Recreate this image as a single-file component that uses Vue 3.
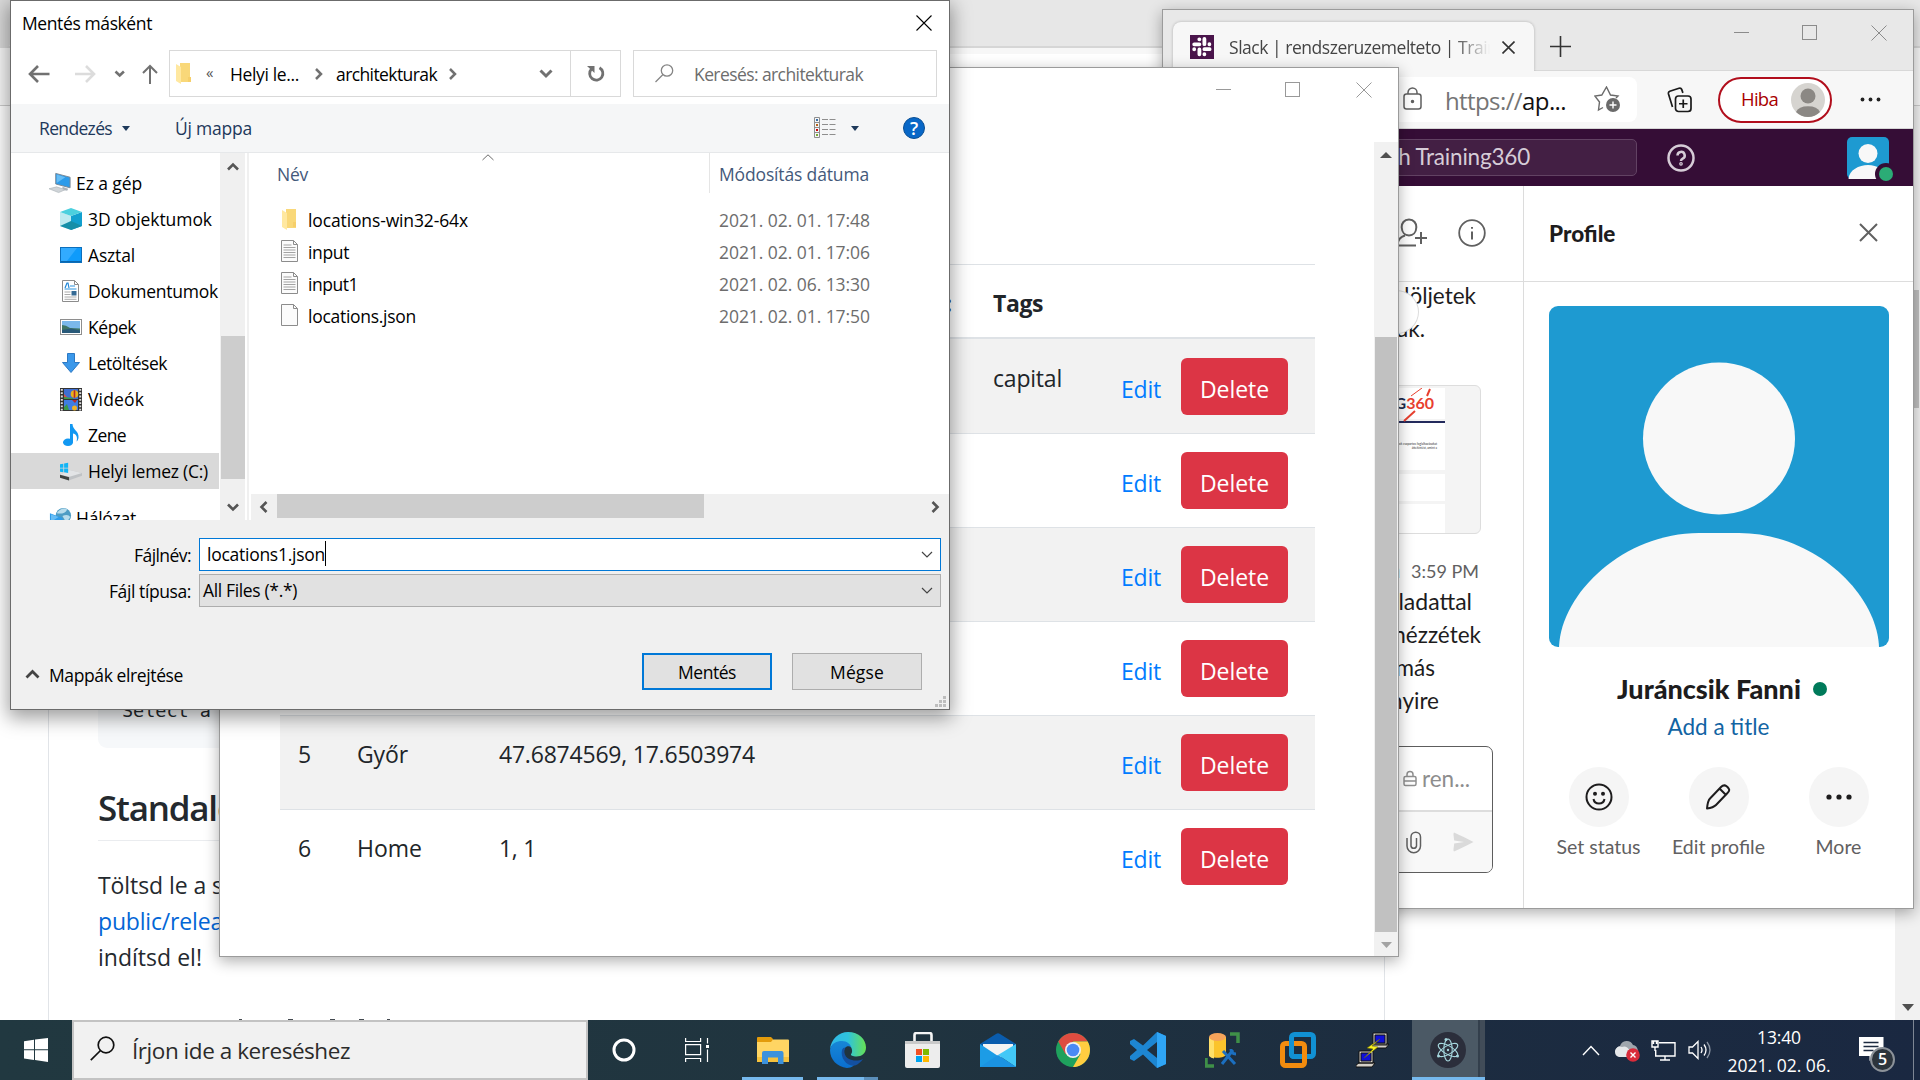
<script setup>
const tree = [
  { icon: 'pc', label: 'Ez a gép', w: 66, root: true },
  { icon: 'cube', label: '3D objektumok', w: 124 },
  { icon: 'desk', label: 'Asztal', w: 47 },
  { icon: 'docs', label: 'Dokumentumok', w: 130 },
  { icon: 'pics', label: 'Képek', w: 48 },
  { icon: 'down', label: 'Letöltések', w: 79 },
  { icon: 'film', label: 'Videók', w: 56 },
  { icon: 'note', label: 'Zene', w: 38 },
  { icon: 'disk', label: 'Helyi lemez (C:)', w: 120, selected: true },
  { icon: 'net', label: 'Hálózat', w: 60, root: true, gap: true },
]
const files = [
  { icon: 'folder', name: 'locations-win32-64x', w: 160, date: '2021. 02. 01. 17:48' },
  { icon: 'text', name: 'input', w: 41, date: '2021. 02. 01. 17:06' },
  { icon: 'text', name: 'input1', w: 50, date: '2021. 02. 06. 13:30' },
  { icon: 'blank', name: 'locations.json', w: 108, date: '2021. 02. 01. 17:50' },
]
const rows = [
  { id: 1, name: '', coords: '', tags: 'capital' },
  { id: 2, name: '', coords: '', tags: '' },
  { id: 3, name: '', coords: '', tags: '' },
  { id: 4, name: '', coords: '', tags: '' },
  { id: 5, name: 'Győr', nw: 51, coords: '47.6874569, 17.6503974', cw: 256, tags: '' },
  { id: 6, name: 'Home', nw: 65, coords: '1, 1', cw: 37, tags: '' },
]

// Tracks a label so that it spans the given width.
const vFit = {
  mounted(el, { value }) {
    if (!value) return
    const range = document.createRange()
    range.selectNodeContents(el)
    const width = range.getBoundingClientRect().width
    const count = el.textContent.length
    if (count) el.style.letterSpacing = ((value - width) / count).toFixed(3) + 'px'
  },
}
</script>

<template>
  <div class="desktop">
    <!-- Background browser -->
    <div class="back">
      <div class="back-strip"><div class="back-tab"></div></div>
      <div class="back-bar"><div class="back-address"></div></div>
      <div class="back-body">
        <div class="gutter"></div>
        <article class="doc">
          <div class="code"><span v-fit="89">Select a</span></div>
          <h2><span v-fit="179">Standalone</span></h2>
          <p><span v-fit="125">Töltsd le a s</span></p>
          <p class="link"><span v-fit="125">public/relea</span></p>
          <p><span v-fit="104">indítsd el!</span></p>
          <svg class="ticks" width="156" height="2"><path d="M1 1h3M50 1h5M92 1h5M121 1h5M149 1h3" stroke="#444a50" stroke-width="2" /></svg>
        </article>
        <div class="back-side"></div>
        <div class="back-scroll">
          <div class="back-thumb"></div>
          <svg width="12" height="7"><path d="M0 0h12l-6 7z" fill="#505050" /></svg>
        </div>
      </div>
    </div>

    <!-- Slack window -->
    <section class="win slack">
      <div class="tabs">
        <div class="tab">
          <svg width="24" height="24" viewBox="0 0 24 24"><rect width="24" height="24" fill="#4a154b" /><g stroke="#fff" stroke-width="3.800" stroke-linecap="round"><path d="M9.3 4.3h0.1M9.4 9.3H4.2M14.4 4v5.2M19.4 9.2v.1M14.4 14.2h5.2M14.4 19.2v.1M9.4 14.4v4.9M4.2 14.3v-.1" /></g></svg>
          <div class="tab-title"><span>Slack | rendszeruzemelteto | Training360</span></div>
          <svg class="tab-x" width="13" height="13"><path d="M.5.5l12 12M12.500.5l-12 12" stroke="#333" stroke-width="1.600" /></svg>
        </div>
        <svg class="plus" width="21" height="21"><path d="M10.500 0v21M0 10.500h21" stroke="#333" stroke-width="1.600" /></svg>
        <svg class="winbtns" width="153" height="16" fill="none" stroke="#8b8b8b"><path d="M0 7.500h15M137.500.5l15 15M152.500.5l-15 15" /><rect x="68.500" y=".5" width="14" height="14" /></svg>
      </div>
      <div class="toolbar">
        <div class="addr">
          <svg width="20" height="24" fill="none" stroke="#5f5f5f" stroke-width="1.500"><rect x="1" y="7" width="17" height="15" rx="2.500" /><path d="M5 7V5.500a4.500 4.500 0 0 1 9 0V7" /><circle cx="9.500" cy="14.500" r="1" fill="#5f5f5f" /></svg>
          <span class="url" v-fit="121"><i>https://</i>ap...</span>
          <svg width="27" height="27" viewBox="0 0 27 27" fill="none" stroke="#6a6a6a" stroke-width="1.400"><path d="M9 21.500l-4.500 2.500 1-8L.8 10l7-1L12.500 1l4 8 7.500 1-2 2" /><circle cx="19" cy="19" r="7" fill="#6a6a6a" stroke="none" /><path d="M19 15.500v7M15.500 19h7" stroke="#fff" /></svg>
        </div>
        <svg class="coll" width="26" height="26" viewBox="0 0 26 26" fill="none" stroke="#1a1a1a" stroke-width="1.700"><rect x="8.500" y="9" width="15.500" height="15.500" rx="3" /><path d="M16.250 12.500v8.500M12 16.750h8.500M5.500 20L1.500 7Q1 5 2.800 4.300L12 1.200q2-.6 2.700 1.200l1.200 3.500" /></svg>
        <div class="pill"><span v-fit="37">Hiba</span>
          <svg width="34" height="34" viewBox="0 0 34 34"><circle cx="17" cy="17" r="17" fill="#d6d4d0" /><circle cx="17" cy="13" r="7.500" fill="#8b8884" /><path d="M5 29a12.500 8 0 0 1 24 0 17 17 0 0 1-24 0z" fill="#8b8884" /></svg>
        </div>
        <svg class="dots" width="21" height="5"><g fill="#222"><circle cx="2.500" cy="2.500" r="1.900" /><circle cx="10.500" cy="2.500" r="1.900" /><circle cx="18.500" cy="2.500" r="1.900" /></g></svg>
      </div>
      <header class="slack-top">
        <div class="slack-search"><span>Search Training360</span></div>
        <svg class="help" width="28" height="28" viewBox="0 0 28 28" fill="none" stroke="#d6ccd7" stroke-width="2.500"><circle cx="14" cy="14" r="12.500" /><path d="M10.500 11.500a3.600 3.600 0 1 1 5.200 3.200q-1.700.9-1.700 2.300" /><circle cx="14" cy="19.800" r=".6" /></svg>
        <svg class="me" width="48" height="48" viewBox="0 0 48 48"><rect x="0" y="3" width="42" height="42" rx="5" fill="#1e9ad1" /><circle cx="21" cy="19.500" r="9.500" fill="#f8f8f8" /><path d="M1.500 45C2 36 12 31 21 31s18 5 19 14z" fill="#f8f8f8" /><circle cx="39" cy="40" r="11" fill="#350d36" /><circle cx="39" cy="40" r="7" fill="#2bac76" /></svg>
      </header>
      <div class="slack-body">
        <div class="chat">
          <div class="chat-head">
            <svg width="31" height="29" viewBox="0 0 31 29" fill="none" stroke="#606060" stroke-width="2"><path d="M12 1.500c5 0 7.500 4 7.300 8-.2 5-3.300 8-7.300 8s-7-3-7.300-8c-.2-4 2.300-8 7.300-8zM8 17.500c-5 1.500-7.500 5-7.500 10H19M24 14v12M18 20h12" /></svg>
            <svg width="28" height="28" viewBox="0 0 28 28" fill="none" stroke="#606060" stroke-width="1.800"><circle cx="14" cy="14" r="12.800" /><path d="M14 12.500v8M14 8v1.800" stroke-width="2" /></svg>
          </div>
          <div class="msgs">
            <div class="m1">küldöljetek</div>
            <div class="m2">hozzájuk.</div>
            <div class="preview">
              <div class="page">
                <svg width="70" height="36" viewBox="0 0 70 36" stroke="#e8402f" fill="none"><path d="M34 8L45 0" /><path d="M53 1l-3 7M27 33l11-10" stroke-width="2" /></svg>
                <b><u>G</u>360</b>
                <hr />
                <small>feladatok csoportos foglalkozásokat<br />áttekintést, amint a</small>
                <div class="cell"></div><div class="cell last"></div>
              </div>
            </div>
            <div class="time"><em>n</em>3:59 PM</div>
            <div class="line l1">feladattal</div>
            <div class="line l2">nézzétek</div>
            <div class="line l3">más</div>
            <div class="line l4">mennyire</div>
            <div class="bubble"></div>
          </div>
          <div class="composer">
            <div class="ph">
              <svg width="14" height="17" fill="none" stroke="#8f8f8f" stroke-width="1.500"><rect x="1" y="6.500" width="12" height="9" rx="1.500" /><path d="M4 6V4.500a3 3 0 0 1 6 0V6M1 11h12" /></svg>ren...
            </div>
            <div class="tools">
              <svg width="16" height="23" viewBox="0 0 16 23" fill="none" stroke="#606060" stroke-width="1.500"><path d="M1 7v8a6.500 6.500 0 0 0 13.500 0V6a4.700 4.700 0 0 0-9.500 0v9a2.800 2.800 0 0 0 5.500 0V7" /></svg>
              <svg width="21" height="20" viewBox="0 0 21 20"><path d="M1 .5q8 3.500 19.500 9.500Q9 16 1 19.500q-.8-1-.5-2.500l.7-5.500L11 10 1.200 8.500.5 3Q.2 1.500 1 .5z" fill="#dadada" /></svg>
            </div>
          </div>
        </div>
        <aside class="profile">
          <div class="prof-head"><b>Profile</b>
            <svg width="19" height="19"><path d="M1 1l17 17M18 1L1 18" stroke="#606060" stroke-width="2" /></svg>
          </div>
          <svg class="photo" width="340" height="341" viewBox="0 0 340 341"><rect width="340" height="341" rx="9" fill="#1e9ad1" /><circle cx="170" cy="132.500" r="76" fill="#f8f8f8" /><path d="M10 341C12 287 75 227 150 227h40c75 0 138 60 140 114z" fill="#f8f8f8" /></svg>
          <div class="name">Juráncsik Fanni<i></i></div>
          <div class="addtitle">Add a title</div>
          <div class="acts">
            <div class="act"><div><svg width="28" height="28" viewBox="0 0 28 28" fill="none" stroke="#1d1c1d" stroke-width="2"><circle cx="14" cy="14" r="12.500" /><path d="M8.500 16c1 6 10 6 11 0" /><g fill="#1d1c1d" stroke="none"><circle cx="10" cy="10.800" r="2" /><circle cx="18" cy="10.800" r="2" /></g></svg></div>Set status</div>
            <div class="act"><div><svg width="25" height="26" viewBox="0 0 25 26" fill="none" stroke="#1d1c1d" stroke-width="2" stroke-linejoin="round"><path d="M1 24.500c.5-5 1-8 3-10L15 3c3-3 5-1.500 6.500 0s3 3.500 0 6L10 21c-2.500 2.500-5 3-9 3.500zM13.500 4.500l7 7" /></svg></div>Edit profile</div>
            <div class="act"><div><svg width="26" height="6"><g fill="#1d1c1d"><circle cx="3" cy="3" r="2.600" /><circle cx="13" cy="3" r="2.600" /><circle cx="23" cy="3" r="2.600" /></g></svg></div>More</div>
          </div>
        </aside>
      </div>
    </section>

    <!-- Locations app window -->
    <section class="win app">
      <div class="app-title">
        <svg width="156" height="16" fill="none" stroke="#999"><path d="M0 7.500h15M140.500.5l15 15M155.500.5l-15 15" /><rect x="69.500" y=".5" width="14" height="14" /></svg>
      </div>
      <div class="app-body">
        <div class="table">
          <div class="tr th"><span class="c1">#</span><span class="c2">Name</span><span class="c3"><b>:</b></span><span class="c4" v-fit="50">Tags</span></div>
          <div v-for="r in rows" :key="r.id" class="tr" :class="{ odd: r.id % 2 }">
            <span class="c1">{{ r.id }}</span>
            <span class="c2"><span v-fit="r.nw">{{ r.name }}</span></span>
            <span class="c3"><span v-fit="r.cw">{{ r.coords }}</span></span>
            <span class="c4"><span v-fit="r.tags ? 69 : 0">{{ r.tags }}</span></span>
            <a><span v-fit="40">Edit</span></a>
            <button><span v-fit="69">Delete</span></button>
          </div>
        </div>
        <div class="app-scroll">
          <svg width="12" height="6"><path d="M0 6h12L6 0z" fill="#505050" /></svg>
          <div></div>
          <svg width="11" height="6"><path d="M0 0h11L5.500 6z" fill="#a3a3a3" /></svg>
        </div>
      </div>
    </section>

    <!-- Save dialog -->
    <section class="dialog">
      <div class="d-title"><span v-fit="130">Mentés másként</span>
        <svg width="16" height="16"><path d="M.5.5l15 15M15.500.5l-15 15" stroke="#000" stroke-width="1.100" /></svg>
      </div>
      <div class="d-nav">
        <svg class="arrows" width="130" height="24" viewBox="0 0 130 24" fill="none" stroke="#717171" stroke-width="2.600"><path d="M22.500 12h-18M11 4l-8 8 8 8" /><path d="M48 12h18M59 4l8 8-8 8" stroke="#dcdcdc" /><path d="M88.500 9.500l4.200 4 4.200-4" /><path d="M123 22V4M116 11l7-7 7 7" stroke-width="2" /></svg>
        <div class="path">
          <svg width="16" height="21" viewBox="0 0 16 21"><path d="M4 0h10v19H4z" fill="#f9d879" /><path d="M0 1l5 3v17l-5-3z" fill="#ffe8a0" /><path d="M12 14h3v5h-3z" fill="#f6cf6a" /></svg>
          <span class="laq">«</span>
          <span class="p1" v-fit="69">Helyi le...</span>
          <svg width="8" height="12"><path d="M1 1l5 5-5 5" fill="none" stroke="#717171" stroke-width="2.500" /></svg>
          <span class="p2" v-fit="101">architekturak</span>
          <svg width="8" height="12"><path d="M1 1l5 5-5 5" fill="none" stroke="#717171" stroke-width="2.500" /></svg>
          <svg class="pd" width="14" height="10"><path d="M1.500 1.500l5.500 5.500 5.500-5.500" fill="none" stroke="#717171" stroke-width="3" /></svg>
          <div class="refresh"><svg width="18" height="18" viewBox="0 0 18 18"><path d="M12.500 2.800A6.600 6.600 0 1 1 4.500 4" fill="none" stroke="#717171" stroke-width="2.800" /><path d="M0 1h7.500v7z" fill="#717171" /></svg></div>
        </div>
        <div class="search">
          <svg width="19" height="19" fill="none" stroke="#858585" stroke-width="1.300"><circle cx="12" cy="6.500" r="5.700" /><path d="M8 10.500L.5 18" /></svg>
          <span v-fit="169">Keresés: architekturak</span>
        </div>
      </div>
      <div class="d-cmd">
        <span v-fit="73">Rendezés</span>
        <svg width="8" height="5"><path d="M0 0h8L4 5z" fill="#1e395b" /></svg>
        <span class="nf" v-fit="77">Új mappa</span>
        <svg class="view" width="22" height="22" fill="none" stroke="#8e8e8e"><path d="M.5.5h5v20h-5zM.5 5.500h5M.5 10.500h5M.5 15.500h5" /><path d="M8 2.500h6M15.500 2.500h6M8 7.500h6M15.500 7.500h6M8 12.500h6M15.500 12.500h6M8 17.500h6M15.500 17.500h6" /><path d="M2 3h2" stroke="#3a6ea5" stroke-width="2" /><path d="M2 8h2" stroke="#b5651d" stroke-width="2" /><path d="M2 13h2" stroke="#c00" stroke-width="2" /><path d="M2 18h2" stroke="#7a3" stroke-width="2" /></svg>
        <svg width="8" height="5"><path d="M0 0h8L4 5z" fill="#1e395b" /></svg>
        <div class="q">?</div>
      </div>
      <div class="d-main">
        <div class="tree">
          <div v-for="t in tree" :key="t.label" class="node" :class="{ root: t.root, sel: t.selected, gap: t.gap }">
            <svg v-if="t.icon === 'pc'" width="24" height="22" viewBox="0 0 24 22"><path d="M7 1l15 4v11L7 12z" fill="#2c9bea" stroke="#7a8894" /><path d="M8 2l9 3-9 6z" fill="#66bdf5" /><path d="M14 15l6 2-1 2-5-1z" fill="#aab2ba" /><path d="M0 17l8-2 9 3-7 3z" fill="#cfd4d8" stroke="#a5adb3" stroke-width=".6" /></svg>
            <svg v-else-if="t.icon === 'cube'" width="22" height="22" viewBox="0 0 22 22"><path d="M0 4l11 4v14L0 18z" fill="#bdeaf0" /><path d="M22 4L11 8v14l11-4z" fill="#12a0cf" /><path d="M0 4l11-4 11 4-11 4z" fill="#4bd0de" /><path d="M0 18l11-5 11 5-11 4z" fill="#168fa8" /></svg>
            <svg v-else-if="t.icon === 'desk'" width="22" height="16"><rect x=".5" y=".5" width="21" height="15" fill="#0f9bfb" stroke="#0c6fbc" /><path d="M1 1h16L7 14H1z" fill="#32abff" /><path d="M1 14.500h20" stroke="#0a66ad" /></svg>
            <svg v-else-if="t.icon === 'docs'" width="22" height="22" viewBox="0 0 22 22"><path d="M2.500.5h12l4 4v17h-16z" fill="#fff" stroke="#8c8c8c" /><path d="M14.500.5v4h4" fill="none" stroke="#8c8c8c" /><path d="M5 8l2-5h1l1 5" stroke="#1f86d8" stroke-width="1.200" fill="none" /><path d="M10 6h5M4.500 9h12" stroke="#2d93e0" stroke-width="1.200" /><path d="M4.500 12h6M4.500 14.500h6M4.500 17h12M4.500 19.300h12" stroke="#aaa" /><path d="M11.500 11h5v4.500h-5z" fill="#346a94" /></svg>
            <svg v-else-if="t.icon === 'pics'" width="22" height="16"><rect x=".5" y=".5" width="21" height="15" fill="#fff" stroke="#8e8e8e" /><rect x="2" y="2" width="18" height="12" fill="#7bb8ea" /><path d="M2 6q4 0 8 3l10 .5V14H2z" fill="#3f7565" /><path d="M2 11l9-1.500 9 2V14H2z" fill="#285979" /></svg>
            <svg v-else-if="t.icon === 'down'" width="22" height="20"><path d="M7.500.5h7v9h5L11 19.500 2.500 9.500h5z" fill="#3b98ea" stroke="#2c79c4" /></svg>
            <svg v-else-if="t.icon === 'film'" width="22" height="23" viewBox="0 0 22 23"><rect width="22" height="23" fill="#333" /><path d="M1.800 1v22M20.200 1v22" stroke="#ddd" stroke-width="2" stroke-dasharray="1.800 1.500" /><rect x="4" y="1" width="14" height="10" fill="#3f6fd2" /><rect x="4" y="12" width="14" height="10" fill="#3f7de4" /><path d="M4 11V6l4 4 5 1z" fill="#dc5148" /><path d="M4 11v-2l9 1v1zM4 22v-3l3-3 2 6z" fill="#3c9a4a" /><circle cx="14.500" cy="6" r="3.800" fill="#e8b21a" /><path d="M14.500 2.200v7.600" stroke="#b8262a" stroke-width="1.600" /><circle cx="14.500" cy="20" r="2.500" fill="#f1b326" /><path d="M12 12l5 0-2 3z" fill="#b42c2c" /></svg>
            <svg v-else-if="t.icon === 'note'" width="22" height="22" viewBox="0 0 22 22"><ellipse cx="8" cy="18.300" rx="5" ry="3.700" fill="#1198f2" /><path d="M10 18V0h2.500c0 6 7 7 6 14-.3 1.500-1 3-2 3.500C18 13 16 10 13 9.500V18z" fill="#1198f2" /></svg>
            <svg v-else-if="t.icon === 'disk'" width="23" height="20" viewBox="0 0 23 20"><path d="M0 14l10-5 13 3v3L9 20l-9-4z" fill="#bfc2c5" /><path d="M0 14l10-5 13 3-13 4z" fill="#e2e4e6" /><path d="M0 14l9.500 2.500V20L0 17z" fill="#3e4240" /><path d="M0 3l3.500-.6V6.500H0zM4.300 2.200L8.500 1.500v5H4.300zM0 7.300h3.500v3.900L0 10.700zM4.300 7.300h4.200V12l-4.200-.7z" fill="#12b5f5" /></svg>
            <svg v-else width="24" height="22" viewBox="0 0 24 22"><circle cx="15" cy="8.500" r="8" fill="#4d9cc4" /><path d="M8 6c3-5 8-6 11-4-2 4-6 5-11 4zM14 9c4-2 7-1 8 1-1 3-3 4-5 4z" fill="#b7dcec" /><path d="M1 6l13 5v11H1z" fill="#2c9bea" /><path d="M2 7l8 3-8 5z" fill="#66bdf5" /></svg>
            <span v-fit="t.w">{{ t.label }}</span>
          </div>
        </div>
        <div class="d-vs">
          <svg width="12" height="9"><path d="M1 7.500l5-5 5 5" fill="none" stroke="#555" stroke-width="2.600" /></svg>
          <div></div>
          <svg width="12" height="9"><path d="M1 1.500l5 5 5-5" fill="none" stroke="#555" stroke-width="2.600" /></svg>
        </div>
        <div class="files">
          <div class="f-head">
            <div class="fc1"><span v-fit="31">Név</span><svg width="12" height="7"><path d="M.5 6L6 .8 11.500 6" fill="none" stroke="#6b6b6b" /></svg></div>
            <div class="fc2"><span v-fit="150">Módosítás dátuma</span></div>
          </div>
          <div class="f-list">
            <div v-for="f in files" :key="f.name" class="file">
              <svg v-if="f.icon === 'folder'" width="17" height="21" viewBox="0 0 17 21"><path d="M5 0h10v19H5z" fill="#f9d879" /><path d="M1 1l5 3v17l-5-3z" fill="#ffe8a0" /><path d="M12 13h3v5h-3z" fill="#f6cf6a" /></svg>
              <svg v-else width="17" height="22" viewBox="0 0 17 22"><path d="M.5.5h12l4 4v17H.5z" fill="#fbfbfb" stroke="#8c8c8c" /><path d="M12.500.5v4h4" fill="none" stroke="#8c8c8c" /><path v-if="f.icon === 'text'" d="M2.500 5h8M2.500 7.500h12M2.500 10h12M2.500 12.500h12M2.500 15h12M2.500 17.500h12" stroke="#a3a3a3" /></svg>
              <div class="fn"><span v-fit="f.w">{{ f.name }}</span></div>
              <div class="fd"><span v-fit="151">{{ f.date }}</span></div>
            </div>
          </div>
          <div class="d-hs">
            <svg width="9" height="12"><path d="M7.500 1l-5 5 5 5" fill="none" stroke="#555" stroke-width="2.600" /></svg>
            <div></div>
            <svg width="9" height="12"><path d="M1.500 1l5 5-5 5" fill="none" stroke="#555" stroke-width="2.600" /></svg>
          </div>
        </div>
      </div>
      <div class="d-form">
        <label><span v-fit="57">Fájlnév:</span></label>
        <div class="field focus"><span v-fit="118">locations1.json</span><i></i>
          <svg width="12" height="8"><path d="M1 1l5 5 5-5" fill="none" stroke="#444" stroke-width="1.200" /></svg></div>
        <label><span v-fit="82">Fájl típusa:</span></label>
        <div class="field"><span v-fit="94">All Files (*.*)</span>
          <svg width="12" height="8"><path d="M1 1l5 5 5-5" fill="none" stroke="#444" stroke-width="1.200" /></svg></div>
      </div>
      <div class="d-foot">
        <svg width="15" height="10"><path d="M1.500 8.500l6-6 6 6" fill="none" stroke="#444" stroke-width="2.800" /></svg>
        <span v-fit="134">Mappák elrejtése</span>
        <div class="btn def"><span v-fit="58">Mentés</span></div>
        <div class="btn"><span v-fit="54">Mégse</span></div>
      </div>
      <svg class="grip" width="12" height="12" fill="#bdbdbd"><path d="M8 0h3v3H8zM4 4h3v3H4zM8 4h3v3H8zM0 8h3v3H0zM4 8h3v3H4zM8 8h3v3H8z" /></svg>
    </section>

    <!-- Taskbar -->
    <footer class="taskbar">
      <div class="start"><svg width="24" height="24" viewBox="0 0 24 24"><path d="M0 3.300L10 1.800V11.300H0zM11 1.600L24 0v11.300H11zM0 12.300h10v9.600L0 20.600zM11 12.300h13V24l-13-1.900z" fill="#fff" /></svg></div>
      <div class="tb-search">
        <svg width="25" height="25" fill="none" stroke="#111" stroke-width="1.700"><circle cx="16" cy="9" r="7.800" /><path d="M10.500 14.500L.8 24.200" /></svg>
        <span v-fit="218">Írjon ide a kereséshez</span>
      </div>
      <div class="ic"><svg width="24" height="24"><circle cx="12" cy="12" r="10" fill="none" stroke="#fff" stroke-width="3" /></svg></div>
      <div class="ic"><svg width="25" height="24" fill="none" stroke="#fff" stroke-width="1.200"><path d="M.6 0v3.500h15V0M.6 24v-3.500h15V24M.6 6.600h15v10H.6zM22.500 0v5.500M22.500 11.500V24" /><path d="M21 7h3v3h-3z" fill="#fff" stroke="none" /></svg></div>
      <div class="ic run"><svg width="32" height="27" viewBox="0 0 32 27"><path d="M0 1q0-1 1-1h13l2 2v5H0z" fill="#e39b0b" /><path d="M0 5h14l2-2.500h15q1 0 1 1V25H0z" fill="#ffd563" /><path d="M0 20h32v5H0z" fill="#f6c23c" /><path d="M5 27V16q0-2 2-2h17.500q2 0 2 2v11H21v-6.500H11V27z" fill="#3c92dc" /></svg></div>
      <div class="ic run multi"><svg width="36" height="36" viewBox="0 0 36 36">
        <defs><linearGradient id="eg" x1="0" x2="1"><stop offset="0" stop-color="#2fb7e8" /><stop offset=".5" stop-color="#2fc3dc" /><stop offset="1" stop-color="#67e053" /></linearGradient><linearGradient id="eb" x1="0" y1="0" x2="0" y2="1"><stop offset="0" stop-color="#1787d6" /><stop offset="1" stop-color="#0a6fcf" /></linearGradient></defs>
        <path d="M0 17C1 7 9 0 18 0c11 0 18 7.500 18 15.500 0 6-4.500 9-9.500 9-4 0-6-1.200-5.500-2.300 2-2 1.500-7-2.500-9.500C13 8.500 3 9.500 0 17z" fill="url(#eg)" />
        <path d="M0 18C1 11 7 9 12 9c5 0 9 3.500 9.500 7-1.500-2.500-5-2.500-6.500 0-4 6 1 15 9 17.500-3 1.800-4.500 2.500-7 2.500C7 35 0 27.500 0 18z" fill="url(#eb)" />
        <path d="M12 18c-2 8 5 17 13 15.500 3-1 6.500-4 8-6.500-6 3-17 2-18.500-6-.3-2 0-4 1-5.500-1.500 0-3 .8-3.500 2.500z" fill="#1350a0" /></svg></div>
      <div class="ic"><svg width="36" height="36" viewBox="0 0 36 36"><path d="M9.500 12V3q0-2 2-2h13q2 0 2 2v9" fill="none" stroke="#f5f5f5" stroke-width="2.600" /><path d="M0 9h35v25q0 2-2 2H2q-2 0-2-2z" fill="#ededed" /><path d="M0 9h35v3H0z" fill="#c9c9c9" /><path d="M11 17h6v6h-6z" fill="#f25022" /><path d="M18 17h6v6h-6z" fill="#7fba00" /><path d="M11 24h6v6h-6z" fill="#00a4ef" /><path d="M18 24h6v6h-6z" fill="#ffb900" /></svg></div>
      <div class="ic"><svg width="36" height="34" viewBox="0 0 36 34"><path d="M0 11L16 1q2-1.500 4 0l16 10v8H0z" fill="#0a5cad" /><path d="M3 11h30v8L18 26 3 19z" fill="#f3f3f3" /><path d="M0 11l18 12L36 34H0z" fill="#1c9ce6" /><path d="M36 11L18 22l18 12z" fill="#42c8f7" /><path d="M0 34l18-12 18 12z" fill="#1b93e2" /></svg></div>
      <div class="ic"><svg width="34" height="34" viewBox="0 0 34 34"><circle cx="17" cy="17" r="17" fill="#1fa15d" /><path d="M2.300 8.500A17 17 0 0 1 31.700 8.500H17l-7.400 12.700z" fill="#de4c40" /><path d="M31.700 8.500A17 17 0 0 1 17 34l7.400-12.700L17 8.500z" fill="#ffcd40" /><circle cx="17" cy="17" r="8" fill="#f1f1f1" /><circle cx="17" cy="17" r="6.300" fill="#4a8af4" /></svg></div>
      <div class="ic"><svg width="36" height="36" viewBox="0 0 36 36"><path d="M27 0l9 4v28l-9 4-14-13.500L4 29l-4-2v-3l7-6-7-6V9l4-2 9 6.500zM27 10l-10 8 10 8z" fill="#1d86d2" fill-rule="evenodd" /><path d="M27 0l9 4v28l-9 4z" fill="#2fa5f5" /></svg></div>
      <div class="ic"><svg width="36" height="36" viewBox="0 0 36 36"><path d="M4 5v17c0 5 17 5 17 0V5z" fill="#fbc42c" /><path d="M4 5v19q2 2 5 2.500V8z" fill="#ffe06a" /><ellipse cx="12.500" cy="5" rx="8.500" ry="4" fill="#f5a35a" /><path d="M25 2h8v9M1 26v8h8" fill="none" stroke="#3f9048" stroke-width="3.500" /><path d="M18 19l12 13M28 18l-11 14M26 17q0 5 5 5" stroke="#1b6fc0" stroke-width="3" fill="none" /></svg></div>
      <div class="ic"><svg width="36" height="36" viewBox="0 0 36 36" fill="none" stroke-width="5"><rect x="11.500" y="2.500" width="22" height="22" rx="3" stroke="#1191d4" /><rect x="2.500" y="11.500" width="22" height="22" rx="3" stroke="#f28c0f" /><path d="M11.500 9v13q0 2.500 2.500 2.500h4" stroke="#1191d4" /></svg></div>
      <div class="ic"><svg width="34" height="36" viewBox="0 0 34 36"><g stroke="#111" stroke-width="1"><path d="M17 1h14v12H17zM14 15l4-3h15l-3 4H14zM3 19h14v12H3zM0 33l3-2h16l-3 4H0z" fill="#d4d0c8" /><path d="M19 3h10v8H19zM5 21h10v8H5z" fill="#1010d8" /></g><path d="M24 7l-13 9 6 1-9 9 14-11-6-1z" fill="#f8f020" stroke="#6b6700" stroke-width=".5" /></svg></div>
      <div class="ic run active"><svg width="36" height="36" viewBox="0 0 36 36"><circle cx="18" cy="18" r="18" fill="#2b2e3b" /><g fill="none" stroke="#a5d6dd" stroke-width="1.100"><ellipse cx="18" cy="18" rx="11" ry="4.200" transform="rotate(-30 18 18)" /><ellipse cx="18" cy="18" rx="11" ry="4.200" transform="rotate(30 18 18)" /><ellipse cx="18" cy="18" rx="11" ry="4.200" transform="rotate(90 18 18)" /></g><g fill="#a5d6dd"><circle cx="18" cy="18" r="1.200" /><circle cx="8.500" cy="24" r="1.500" /><circle cx="27.500" cy="24" r="1.500" /><circle cx="16" cy="7.500" r="1.500" /></g></svg></div>
      <div class="tray">
        <svg width="18" height="11"><path d="M1 10l8-8.500L17 10" fill="none" stroke="#fff" stroke-width="1.400" /></svg>
        <svg class="cloud" width="25" height="22" viewBox="0 0 25 22"><path d="M3 15a5 5 0 0 1 2-9 7 7 0 0 1 13-1 6 6 0 0 1 2 11z" fill="#9fa6ad" /><path d="M0 12a5 5 0 0 1 7-5 6 6 0 0 1 8 5v5H4q-4-1-4-5z" fill="#e6e8ea" /><circle cx="18" cy="15" r="6.800" fill="#d92b3a" /><path d="M15.500 12.500l5 5M20.500 12.500l-5 5" stroke="#fff" stroke-width="1.400" /></svg>
        <svg class="lan" width="25" height="21" fill="none" stroke="#fff" stroke-width="1.400"><path d="M8 2.700h16V16H4.700V10M9 20h10M14 16v4M1 1h6v6H1zM4 7v4M2.500 1v3M5.500 1v3" /></svg>
        <svg class="vol" width="24" height="20" fill="none" stroke="#fff" stroke-width="1.300"><path d="M1 7h3.500L10 1.500v17L4.500 13H1zM13 7q2 3 0 6M16 4.500q4 5.500 0 11" /><path d="M19 2q6 8 0 16" stroke="#8b95a3" /></svg>
        <div class="clock"><span v-fit="44">13:40</span><span v-fit="103">2021. 02. 06.</span></div>
        <div class="note"><svg width="25" height="26"><path d="M0 0h24.500v19h-9l-5 5v-5H0z" fill="#fff" /><path d="M4.500 5.500h15M4.500 9.500h15M4.500 13.500h10" stroke="#1d2b40" stroke-width="1.300" /></svg><b>5</b></div>
        <div class="peek"></div>
      </div>
    </footer>
  </div>
</template>

<style>
body { margin: 0; overflow: hidden; }
</style>

<style scoped>
* { box-sizing: border-box; }
svg { display: block; flex: none; }
.desktop { position: relative; width: 1920px; height: 1080px; overflow: hidden; background: #fff; font-family: "Open Sans", "Noto Sans", sans-serif; font-size: 17.500px; color: #000; white-space: nowrap; }

.back { height: 1020px; display: flex; flex-direction: column; }
.back-strip { height: 48px; background: #e7e7e7; border-bottom: 2px solid #d6d6d6; flex: none; }
.back-tab { width: 11px; height: 48px; background: #d9d9d9; border-radius: 0 0 7px 0; }
.back-bar { height: 58px; background: #f7f7f7; border-bottom: 1px solid #ccc; padding: 6px 300px 6px 300px; flex: none; }
.back-address { height: 45px; background: #fff; }
.back-body { flex: 1; display: flex; overflow: hidden; min-height: 0; }
.gutter { width: 49px; border-right: 1px solid #e1e4e8; }
.doc { width: 1336px; padding-left: 49px; border-right: 1px solid #e1e4e8; color: #24292e; font-size: 23px; }
.code { height: 642px; background: #f6f8fa; border-radius: 9px; padding: 591px 0 0 24px; font: 500 18.500px/28px "DejaVu Sans Mono", monospace; }
h2 { margin: 34px 0 25px; height: 59px; padding-top: 2px; border-bottom: 1px solid #eaecef; font-size: 35px; line-height: 48px; font-weight: 600; }
p { margin: 0; line-height: 36px; position: relative; top: 1px; }
.link { color: #0366d6; }
.ticks { margin: 45px 0 0 140px; }
.back-side { flex: 1; }
.back-scroll { width: 25px; background: #f1f1f1; display: flex; flex-direction: column; align-items: center; justify-content: space-between; padding: 184px 0 9px; }
.back-thumb { width: 23px; height: 118px; background: #c1c1c1; }

.win { position: absolute; border: 1px solid #9b9b9b; background: #fff; display: flex; flex-direction: column; box-shadow: 0 4px 14px rgba(0, 0, 0, .32); }
.slack { left: 1162px; top: 9px; width: 752px; height: 900px; }
.tabs { height: 61px; background: #e8e8e8; border-bottom: 1px solid #d8d8d8; display: flex; padding-left: 10px; flex: none; }
.tab { margin-top: 12px; width: 361px; height: 49px; background: #f7f7f7; border-radius: 8px 8px 0 0; box-shadow: 0 0 3px rgba(0, 0, 0, .25); clip-path: inset(-4px -4px 0 -4px); display: flex; padding: 13px 0 0 17px; }
.tab-title { margin-left: 15px; width: 261px; height: 24px; line-height: 24px; overflow: hidden; color: #444; letter-spacing: -.47px; -webkit-mask-image: linear-gradient(90deg, #000 225px, transparent 261px); }
.tab-x { margin: 6px 0 0 12px; }
.plus { margin: 26px 0 0 16px; }
.winbtns { margin: 15px 0 0 163px; }
.toolbar { height: 58px; background: #f7f7f7; border-bottom: 1px solid #d5d5d5; display: flex; align-items: center; flex: none; }
.addr { width: 474px; height: 45px; background: #fff; border-radius: 8px; display: flex; align-items: center; padding-left: 240px; margin-top: -1px; }
.url { margin: 2px 0 0 22px; width: 121px; font-size: 24px; color: #111; }
.url i { font-style: normal; color: #757575; }
.addr svg + .url + svg { margin-left: 28px; }
.coll { margin-left: 30px; }
.pill { margin-left: 25px; width: 114px; height: 46px; border: 2px solid #b10e1c; border-radius: 23px; display: flex; align-items: center; justify-content: space-between; padding: 0 5px 0 21px; color: #a80000; font-size: 18.500px; background: #fff; }
.pill span { margin-top: -3px; }
.dots { margin-left: 28px; }
.slack-top { height: 57px; background: #350d36; display: flex; align-items: center; font-family: Lato, sans-serif; flex: none; }
.slack-search { width: 474px; height: 37px; border: 1px solid #624263; background: #431f44; border-radius: 5px; display: flex; align-items: center; justify-content: flex-end; padding-right: 106px; font-size: 22.500px; color: #d6ccd7; }
.slack-search span { margin-top: -2px; letter-spacing: -.2px; }
.help { margin-left: 30px; }
.me { margin-left: 152px; }
.slack-body { flex: 1; display: flex; font-family: Lato, sans-serif; font-size: 22.500px; color: #1d1c1d; min-height: 0; }
.chat { width: 361px; border-right: 1px solid #dcdcdc; display: flex; flex-direction: column; }
.chat-head { height: 96px; border-bottom: 1px solid #ddd; display: flex; align-items: center; padding: 0 0 2px 234px; gap: 30px; flex: none; }
.msgs { position: relative; height: 464px; line-height: 33px; overflow: hidden; }
.m1 { text-align: right; padding-right: 47px; margin-top: -3px; }
.m2 { text-align: right; padding-right: 98px; }
.preview { margin: 40px 0 0 70px; width: 248px; height: 149px; border: 1px solid #ddd; border-radius: 6px; background: #f4f4f4; overflow: hidden; padding-top: 2px; }
.page { position: relative; width: 211px; height: 146px; background: #f4f4f4; line-height: 1; }
.page svg { position: absolute; right: -2px; top: 0; }
.page b { display: block; height: 31px; background: #fff; padding: 7px 11px 0 0; text-align: right; color: #e8402f; font-size: 16px; letter-spacing: 0; }
.page u { color: #1c2d4e; text-decoration: none; }
.page hr { margin: 2px 0 0; border: 0; height: 2px; background: #232a5c; }
.page small { display: block; height: 47px; background: #fff; font-size: 3px; line-height: 3.500px; padding: 20px 8px 0 0; text-align: right; color: #333; }
.cell { height: 27px; margin-top: 4px; background: #fff; }
.cell.last { height: 32px; margin-top: 3px; }
.time { text-align: right; padding-right: 44px; font-size: 18px; color: #616061; height: 31px; line-height: 34px; margin-top: 20px; }
.time em { font: 900 22.500px Lato, sans-serif; color: #1d3f8f; margin-right: 11px; }
.line { text-align: right; }
.l1 { padding-right: 51px; font-size: 23px; } .l2 { padding-right: 42px; } .l3 { padding-right: 88px; } .l4 { padding-right: 84px; }
.bubble { position: absolute; left: 211px; top: 8px; width: 45px; height: 44px; border: 1px solid #ddd; border-radius: 50%; background: #fff; }
.composer { width: 259px; height: 127px; margin-left: 71px; border: 1px solid #5d5d5d; border-radius: 7px; overflow: hidden; flex: none; }
.ph { height: 63px; padding-left: 168px; display: flex; align-items: center; gap: 5px; color: #8d8d8d; }
.tools { height: 62px; border-top: 2px solid #ddd; background: #f8f8f8; display: flex; align-items: center; gap: 31px; padding-left: 171px; }
.profile { flex: 1; display: flex; flex-direction: column; align-items: center; }
.prof-head { align-self: stretch; height: 96px; border-bottom: 1px solid #ddd; display: flex; align-items: center; justify-content: space-between; padding: 0 35px 0 25px; flex: none; }
.prof-head b { font-weight: 900; }
.prof-head svg { margin-top: -2px; }
.photo { margin-top: 24px; }
.name { font-size: 27px; font-weight: 900; line-height: 34px; margin-top: 25px; padding-left: 7px; display: flex; align-items: center; }
.name i { width: 14px; height: 14px; border-radius: 50%; background: #007a5a; margin-left: 12px; }
.addtitle { color: #1264a3; line-height: 34px; margin-top: 4px; }
.acts { display: flex; margin-top: 23px; }
.act { width: 120px; display: flex; flex-direction: column; align-items: center; font-size: 19.500px; line-height: 24px; color: #616061; }
.act div { width: 60px; height: 60px; border-radius: 50%; background: #f5f5f5; display: flex; align-items: center; justify-content: center; margin-bottom: 8px; }

.app { left: 219px; top: 67px; width: 1180px; height: 890px; }
.app-title { height: 74px; display: flex; justify-content: flex-end; padding: 14px 26px 0 0; flex: none; }
.app-body { flex: 1; display: flex; justify-content: space-between; min-height: 0; }
.table { width: 1035px; margin: 122px 0 0 60px; color: #212529; font-size: 23px; line-height: 36px; }
.tr { height: 94px; border-top: 1px solid #dee2e6; display: flex; padding: 20px 27px 0 18px; }
.th { height: 75px; border-bottom: 2px solid #dee2e6; font-weight: 700; padding-top: 20px; }
.th + .tr { border-top-color: #f2f2f2; }
.odd { background: #f2f2f2; }
.c1 { width: 59px; } .c2 { width: 142px; } .c3 { width: 494px; }
.th .c3 { padding-left: 446px; }
.c4 { width: 128px; }
a { width: 60px; color: #007bff; padding-top: 11px; }
button { width: 107px; height: 57px; margin: -2px 0 0; padding: 4px 0 0; border: 0; border-radius: 6px; background: #dc3545; color: #fff; font: inherit; line-height: 36px; }
.app-scroll { width: 24px; background: #f1f1f1; display: flex; flex-direction: column; align-items: center; padding: 10px 0 8px; justify-content: space-between; }
.app-scroll div { width: 22px; height: 595px; background: #c1c1c1; margin-top: 169px; }

.dialog { position: absolute; left: 10px; top: 0; width: 940px; height: 710px; border: 1px solid #6b6b6b; background: #fff; box-shadow: 0 6px 18px 2px rgba(0, 0, 0, .38); display: flex; flex-direction: column; }
.d-title { height: 46px; display: flex; align-items: center; justify-content: space-between; padding: 0 17px 2px 11px; flex: none; }
.d-nav { height: 57px; display: flex; padding: 3px 11px 0 16px; flex: none; }
.arrows { margin-top: 12px; overflow: visible; }
.path { margin-left: 12px; width: 452px; height: 47px; border: 1px solid #d9d9d9; display: flex; align-items: center; padding-left: 6px; flex: none; }
.laq { width: 13px; margin-left: 14px; font-size: 15px; color: #555; margin-top: -3px; }
.p1 { margin-left: 11px; width: 85px; }
.p2 { margin-left: 13px; width: 113px; }
.pd { margin-left: auto; margin-right: 17px; }
.refresh { width: 50px; height: 45px; border-left: 1px solid #d9d9d9; display: flex; align-items: center; justify-content: center; }
.search { margin-left: 12px; width: 304px; height: 47px; border: 1px solid #d9d9d9; display: flex; align-items: center; padding-left: 21px; gap: 20px; color: #6d6d6d; flex: none; }
.d-cmd { height: 49px; background: #f5f6f7; border-bottom: 1px solid #e6e8ea; display: flex; align-items: center; padding-left: 28px; color: #1e395b; flex: none; }
.d-cmd span { width: 83px; }
.d-cmd .nf { margin-left: 45px; }
.view { margin-left: 556px; margin-right: 15px; }
.q { margin-left: 44px; width: 22px; height: 22px; border-radius: 50%; background: #0867c7; border: 1px solid #0a4f94; color: #fff; font: 600 18px/20px "Open Sans", sans-serif; text-align: center; }
.d-main { height: 367px; display: flex; flex: none; }
.tree { width: 209px; padding-top: 12px; overflow: hidden; height: 367px; }
.node { width: 208px; height: 36px; display: flex; align-items: center; padding-left: 49px; }
.node > svg { width: 22px; }
.node span { margin-left: 6px; }
.node.root { padding-left: 38px; }
.node.root > svg { width: 23px; }
.node.root span { margin-left: 4px; }
.node.sel { background: #d9d9d9; }
.node.gap { margin-top: 11px; }
.d-vs { width: 25px; background: #f0f0f0; display: flex; flex-direction: column; align-items: center; justify-content: space-between; padding: 9px 0 8px; }
.d-vs div { width: 24px; height: 143px; background: #cdcdcd; margin-top: 141px; }
.files { margin-left: 2px; border-left: 2px solid #f0f0f0; width: 702px; display: flex; flex-direction: column; }
.f-head { height: 40px; display: flex; color: #44597a; flex: none; }
.fc1 { width: 461px; border-right: 1px solid #e5e5e5; display: flex; padding: 9px 0 0 28px; line-height: 25px; }
.fc1 span { width: 205px; }
.fc1 svg { margin-top: -8px; }
.fc2 { padding: 9px 0 0 9px; line-height: 25px; }
.f-list { flex: 1; padding-top: 11px; }
.file { height: 32px; display: flex; align-items: center; padding-left: 32px; }
.file svg { margin-top: -2px; }
.fn { width: 411px; margin-left: 10px; }
.fd { color: #6d6d6d; }
.d-hs { height: 26px; background: #f0f0f0; display: flex; align-items: flex-start; margin-left: 2px; padding: 0 9px 0 8px; }
.d-hs svg { margin-top: 7px; }
.d-hs div { width: 427px; height: 24px; background: #cdcdcd; margin: 0 auto 0 9px; }
.d-form { background: #f0f0f0; display: grid; grid-template-columns: 180px 742px; column-gap: 8px; row-gap: 3px; padding-top: 18px; flex: none; }
label { text-align: right; line-height: 34px; height: 33px; }
.field { height: 33px; border: 1px solid #adadad; background: #e1e1e1; display: flex; align-items: center; padding: 0 7px 0 3px; }
.field.focus { background: #fff; border-color: #0078d7; padding-left: 7px; }
.field span { margin-top: -1px; }
.field i { width: 1px; height: 25px; background: #000; margin-top: -3px; }
.field svg { margin-left: auto; }
.d-foot { flex: 1; background: #f0f0f0; display: flex; align-items: flex-start; padding: 46px 0 0 14px; }
.d-foot > svg { margin-top: 16px; }
.d-foot > span { margin-left: 9px; width: 593px; line-height: 45px; }
.btn { width: 130px; height: 37px; border: 1px solid #adadad; background: #e1e1e1; text-align: center; line-height: 36px; margin-right: 20px; flex: none; }
.btn.def { border: 2px solid #0078d7; line-height: 34px; }
.grip { position: absolute; right: 2px; bottom: 1px; }

.taskbar { position: absolute; left: 0; top: 1020px; width: 1920px; height: 60px; background: linear-gradient(90deg, #213840, #20343f 45%, #1c2c40 75%, #1a2841); display: flex; align-items: center; color: #fff; }
.start { width: 72px; display: flex; justify-content: center; }
.tb-search { width: 516px; height: 60px; border: 2px solid #c3c3c3; background: #f1f1f1; color: #2b2b2b; display: flex; align-items: center; padding-left: 16px; gap: 17px; font-size: 22.500px; flex: none; }
.tb-search svg { margin-top: -3px; }
.ic { width: 75px; height: 60px; display: flex; align-items: center; justify-content: center; position: relative; flex: none; }
.ic:nth-child(3) { width: 72px; } .ic:nth-child(4) { width: 76px; margin-left: -1px; }
.ic.run::after { content: ""; position: absolute; left: 7px; bottom: 0; width: 61px; height: 3px; background: #76b9ed; }
.ic.multi::after { background: linear-gradient(90deg, #76b9ed 47px, #5b8fba 47px); }
.ic.active { width: 73px; margin-left: 2px; padding-right: 1px; background: linear-gradient(90deg, #4b5965 66px, #333f4c 66px, #333f4c 68px, #414c58 68px); }
.ic.active::after { left: 0; width: 73px; }
.tray { margin-left: auto; display: flex; align-items: center; height: 60px; }
.cloud { margin-left: 15px; margin-top: 1px; } .lan { margin-left: 11px; } .vol { margin-left: 12px; }
.clock { width: 104px; margin-left: 15px; display: flex; flex-direction: column; align-items: center; line-height: 28px; padding-top: 1px; }
.note { position: relative; width: 40px; margin-left: 28px; }
.note b { position: absolute; left: 11px; top: 10px; width: 25px; height: 25px; border-radius: 50%; background: #2c343c; border: 2px solid #8c9299; font: 600 16px/21px "Open Sans", sans-serif; text-align: center; }
.peek { width: 7px; height: 60px; border-left: 1px solid #7d8694; margin-left: 14px; }
</style>
